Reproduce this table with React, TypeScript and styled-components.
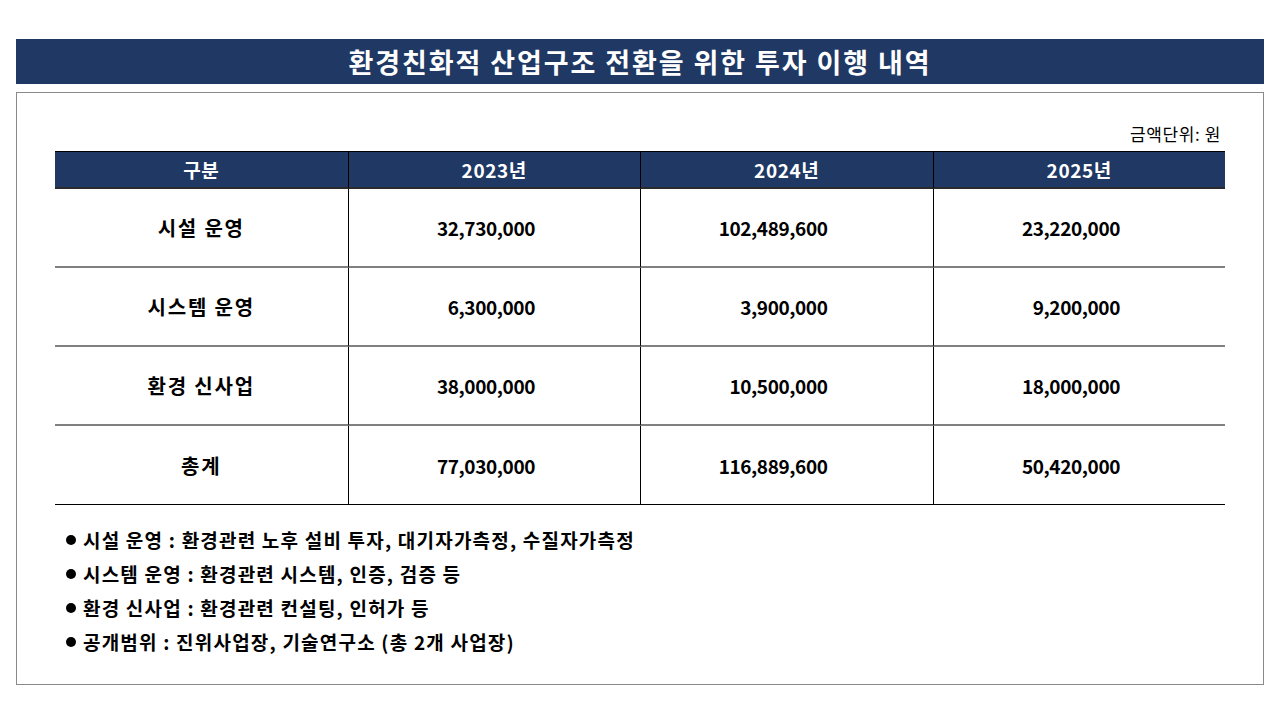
import React from "react";
import styled, { createGlobalStyle } from "styled-components";

const Global = createGlobalStyle`
  html, body { margin: 0; padding: 0; background: #ffffff; }
  body { font-family: "Noto Sans CJK KR", "Noto Sans", sans-serif; color: #000; }
`;

const Page = styled.div`
  width: 1280px;
  height: 720px;
  box-sizing: border-box;
  padding: 39px 16px 0 16px;
  display: flex;
  flex-direction: column;
  gap: 8px;
`;

const TitleBar = styled.div`
  height: 45px;
  background: #203864;
  color: #ffffff;
  display: flex;
  align-items: center;
  justify-content: center;
  font-size: 27px;
  font-weight: 700;
  letter-spacing: 1.9px;
`;

const Panel = styled.div`
  height: 593px;
  box-sizing: border-box;
  border: 1px solid #8a8a8a;
  padding: 31px 38px 0 38px;
  display: flex;
  flex-direction: column;
`;

const Unit = styled.div`
  text-align: right;
  font-size: 17px;
  font-weight: 400;
  line-height: 20px;
  letter-spacing: 0.6px;
  padding-right: 4px;
  margin-bottom: 7px;
`;

const Grid = styled.div`
  display: grid;
  grid-template-columns: repeat(4, 1fr);
`;

const HeadCell = styled.div<{ $first?: boolean }>`
  height: 38px;
  box-sizing: border-box;
  background: #203864;
  color: #ffffff;
  border-top: 1px solid #000;
  border-bottom: 2px solid #2b2b2b;
  border-left: ${(p) => (p.$first ? "none" : "1px solid #000")};
  display: flex;
  align-items: center;
  justify-content: center;
  font-size: 19px;
  font-weight: 700;
  letter-spacing: 0.6px;
`;

const Cell = styled.div<{ $first?: boolean; $last?: boolean }>`
  height: 79px;
  box-sizing: border-box;
  border-left: ${(p) => (p.$first ? "none" : "1px solid #000")};
  border-bottom: ${(p) => (p.$last ? "1px solid #000" : "2px solid #808080")};
  display: flex;
  align-items: center;
  justify-content: ${(p) => (p.$first ? "center" : "flex-end")};
  padding-right: ${(p) => (p.$first ? "0" : "105px")};
  font-size: ${(p) => (p.$first ? "20px" : "19px")};
  letter-spacing: ${(p) => (p.$first ? "1.8px" : "-0.4px")};
  font-weight: 700;
`;

const Notes = styled.ul`
  list-style: none;
  margin: 17px 0 0 0;
  padding: 0 0 0 11px;
`;

const Note = styled.li`
  height: 34px;
  display: flex;
  align-items: center;
  font-size: 19px;
  font-weight: 700;
  letter-spacing: 1.2px;
`;

const Dot = styled.span`
  display: inline-block;
  width: 10px;
  height: 10px;
  border-radius: 50%;
  background: #000;
  margin-right: 7px;
  transform: translateY(1px);
  flex: none;
`;

const headers = ["구분", "2023년", "2024년", "2025년"];
const rows = [
  ["시설 운영", "32,730,000", "102,489,600", "23,220,000"],
  ["시스템 운영", "6,300,000", "3,900,000", "9,200,000"],
  ["환경 신사업", "38,000,000", "10,500,000", "18,000,000"],
  ["총계", "77,030,000", "116,889,600", "50,420,000"],
];
const notes = [
  "시설 운영 : 환경관련 노후 설비 투자, 대기자가측정, 수질자가측정",
  "시스템 운영 : 환경관련 시스템, 인증, 검증 등",
  "환경 신사업 : 환경관련 컨설팅, 인허가 등",
  "공개범위 : 진위사업장, 기술연구소 (총 2개 사업장)",
];

export default function App() {
  return (
    <>
      <Global />
      <Page>
        <TitleBar>환경친화적 산업구조 전환을 위한 투자 이행 내역</TitleBar>
        <Panel>
          <Unit>금액단위: 원</Unit>
          <Grid>
            {headers.map((h, i) => (
              <HeadCell key={h} $first={i === 0}>
                {h}
              </HeadCell>
            ))}
            {rows.map((r, ri) =>
              r.map((c, ci) => (
                <Cell key={`${ri}-${ci}`} $first={ci === 0} $last={ri === rows.length - 1}>
                  {c}
                </Cell>
              ))
            )}
          </Grid>
          <Notes>
            {notes.map((n) => (
              <Note key={n}>
                <Dot />
                {n}
              </Note>
            ))}
          </Notes>
        </Panel>
      </Page>
    </>
  );
}
